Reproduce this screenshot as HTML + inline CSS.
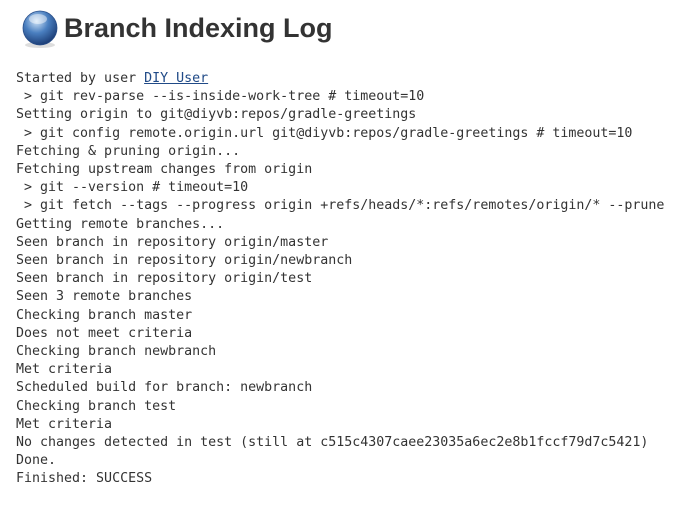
<!DOCTYPE html>
<html><head><style>
body{margin:0;background:#fff;width:690px;height:506px;overflow:hidden}
h1{position:absolute;left:64px;top:9px;margin:0;font:bold 27px "Liberation Sans",sans-serif;color:#333;line-height:38px}
.ic{position:absolute;left:21px;top:10px}
pre{position:absolute;left:16px;top:70px;margin:0;font:13.3px/18.2px "DejaVu Sans Mono",monospace;color:#333}
a{color:#204a87;text-decoration:underline}
</style></head><body>
<svg class="ic" width="40" height="40" viewBox="0 0 40 40">
<defs><radialGradient id="g" cx="0.4" cy="0.3" r="0.7"><stop offset="0" stop-color="#cfe3f7"/><stop offset="0.5" stop-color="#4a7fc0"/><stop offset="1" stop-color="#1d3f78"/></radialGradient></defs>
<ellipse cx="19" cy="35" rx="15" ry="3" fill="#ddd"/>
<circle cx="19" cy="18" r="17" fill="url(#g)" stroke="#2a4f8a" stroke-width="0.8"/>
<ellipse cx="17" cy="9" rx="9" ry="5" fill="#fff" opacity="0.45"/>
</svg>
<h1>Branch Indexing Log</h1>
<pre>Started by user <a>DIY User</a>
 &gt; git rev-parse --is-inside-work-tree # timeout=10
Setting origin to git@diyvb:repos/gradle-greetings
 &gt; git config remote.origin.url git@diyvb:repos/gradle-greetings # timeout=10
Fetching &amp; pruning origin...
Fetching upstream changes from origin
 &gt; git --version # timeout=10
 &gt; git fetch --tags --progress origin +refs/heads/*:refs/remotes/origin/* --prune
Getting remote branches...
Seen branch in repository origin/master
Seen branch in repository origin/newbranch
Seen branch in repository origin/test
Seen 3 remote branches
Checking branch master
Does not meet criteria
Checking branch newbranch
Met criteria
Scheduled build for branch: newbranch
Checking branch test
Met criteria
No changes detected in test (still at c515c4307caee23035a6ec2e8b1fccf79d7c5421)
Done.
Finished: SUCCESS</pre>
</body></html>
